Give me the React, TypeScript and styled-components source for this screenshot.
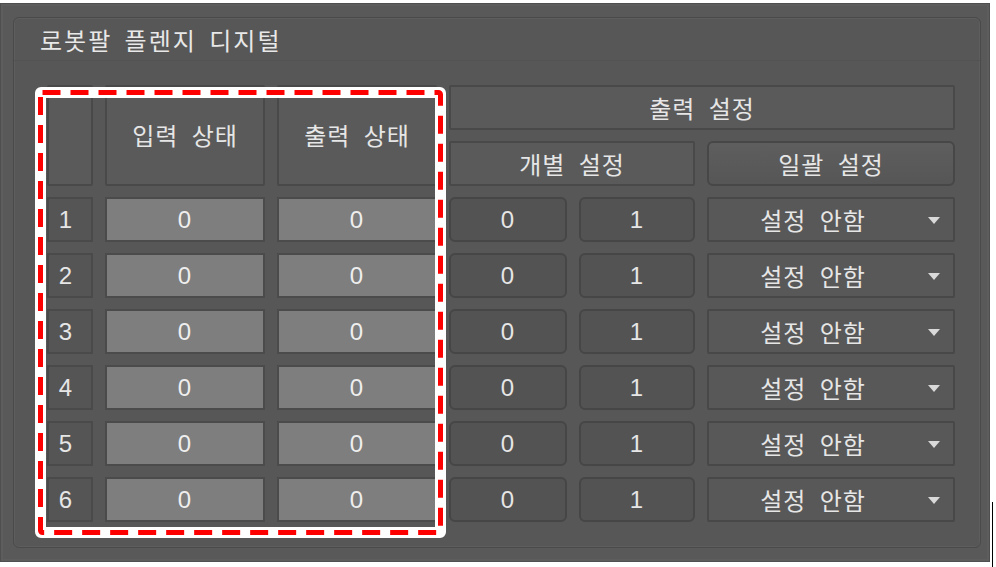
import styled, { createGlobalStyle } from "styled-components";

const rows = [1, 2, 3, 4, 5, 6];

const App = () => {
    return (
        <>
            <Global />
            <Window>
                <GroupBox>
                    <Title>로봇팔 플렌지 디지털</Title>
                    <Body>
                        <Grid>
                            <HeadCell $rows={2} />
                            <HeadCell $rows={2}>입력 상태</HeadCell>
                            <HeadCell $rows={2}>출력 상태</HeadCell>
                            <HeadCell $cols={3}>출력 설정</HeadCell>
                            <HeadCell $cols={2}>개별 설정</HeadCell>
                            <BatchButton>일괄 설정</BatchButton>

                            {rows.map((n) => (
                                <Row key={n}>
                                    <NumCell>{n}</NumCell>
                                    <StateCell>0</StateCell>
                                    <StateCell>0</StateCell>
                                    <SetButton>0</SetButton>
                                    <SetButton>1</SetButton>
                                    <Select>
                                        설정 안함
                                        <Arrow />
                                    </Select>
                                </Row>
                            ))}
                        </Grid>

                        {/* red dashed highlight over the state columns */}
                        <Highlight>
                            <DashSvg width="411" height="451">
                                <rect x="5.5" y="5.5" width="400" height="440" rx="2" fill="none"
                                    stroke="#ff0000" strokeWidth="5" strokeDasharray="18 10" />
                            </DashSvg>
                        </Highlight>
                    </Body>
                </GroupBox>
            </Window>
            <EdgeMark />
        </>
    );
};

export default App;

const Global = createGlobalStyle`
    body {
        margin: 0;
        background: #ffffff;
        font-family: "Noto Sans CJK KR", "Noto Sans", sans-serif;
    }
`

const Window = styled.div`
    width: 990px;
    height: 559px;
    margin-top: 3px;
    box-sizing: border-box;
    background: #595959;
    border: 1px solid #4f4f4f;
    box-shadow: inset 0 0 0 2px #5d5d5d;
    padding: 13px 8px 14px 12px;
`

    const GroupBox = styled.div`
        width: 968px;
        height: 531px;
        box-sizing: border-box;
        border: 1px solid #4a4a4a;
        border-radius: 6px;
        box-shadow: inset 0 0 0 1px #5e5e5e;
        background: #575757;
        display: flex;
        flex-direction: column;
    `

        const Title = styled.div`
            height: 43px;
            padding-left: 26px;
            display: flex;
            align-items: center;
            font-size: 24px;
            letter-spacing: 2px;
            word-spacing: 5px;
            color: #e8e8e8;
            border-bottom: 1px solid #535353;
            box-sizing: border-box;
        `

        const Body = styled.div`
            position: relative;
            padding: 24px 25px 0 33px;
        `

            const Grid = styled.div`
                display: grid;
                grid-template-columns: 46px 160px 160px 118px 116px 248px;
                grid-auto-rows: 45px;
                gap: 11px 12px;
                color: #e6e6e6;
            `

            const Row = styled.div`
                display: contents;
            `

            const Cell = styled.div`
                box-sizing: border-box;
                display: flex;
                align-items: center;
                justify-content: center;
                font-size: 24px;
                letter-spacing: 1px;
                word-spacing: 7px;
            `

                const HeadCell = styled(Cell)<{ $rows?: number; $cols?: number }>`
                    grid-row: span ${(p) => p.$rows || 1};
                    grid-column: span ${(p) => p.$cols || 1};
                    background: #5a5a5a;
                    border: 2px solid #494949;
                    border-radius: 2px;
                    padding-bottom: ${(p) => (p.$rows === 2 ? "2px" : "0")};
                `

                const BatchButton = styled(Cell)`
                    background: linear-gradient(#5e5e5e, #565656);
                    border: 2px solid #474747;
                    border-radius: 6px;
                `

                const NumCell = styled(Cell)`
                    background: #555555;
                    border: 2px solid #4a4a4a;
                    padding-right: 8px;
                    font-family: "Liberation Sans", sans-serif;
                    font-size: 24px;
                `

                const StateCell = styled(Cell)`
                    background: #7e7e7e;
                    border: 2px solid #4b4b4b;
                    font-family: "Liberation Sans", sans-serif;
                    font-size: 24px;
                    color: #eeeeee;
                `

                const SetButton = styled(Cell)`
                    background: #535353;
                    border: 2px solid #464646;
                    border-radius: 6px;
                    font-family: "Liberation Sans", sans-serif;
                    font-size: 24px;
                `

                const Select = styled(Cell)`
                    position: relative;
                    background: #585858;
                    border: 2px solid #484848;
                    border-radius: 2px;
                    padding-right: 36px;
                `

                    const Arrow = styled.span`
                        position: absolute;
                        right: 13px;
                        top: 50%;
                        margin-top: -3px;
                        width: 0;
                        height: 0;
                        border-left: 6px solid transparent;
                        border-right: 6px solid transparent;
                        border-top: 7px solid #d9d9d9;
                    `

            const Highlight = styled.div`
                position: absolute;
                left: 21px;
                top: 26px;
                width: 411px;
                height: 451px;
                box-sizing: border-box;
                border: 11px solid #ffffff;
                border-radius: 6px;
            `

                const DashSvg = styled.svg`
                    position: absolute;
                    left: -11px;
                    top: -11px;
                `

const EdgeMark = styled.div`
    position: absolute;
    left: 992px;
    top: 502px;
    width: 1px;
    height: 65px;
    background: #000000;
`
